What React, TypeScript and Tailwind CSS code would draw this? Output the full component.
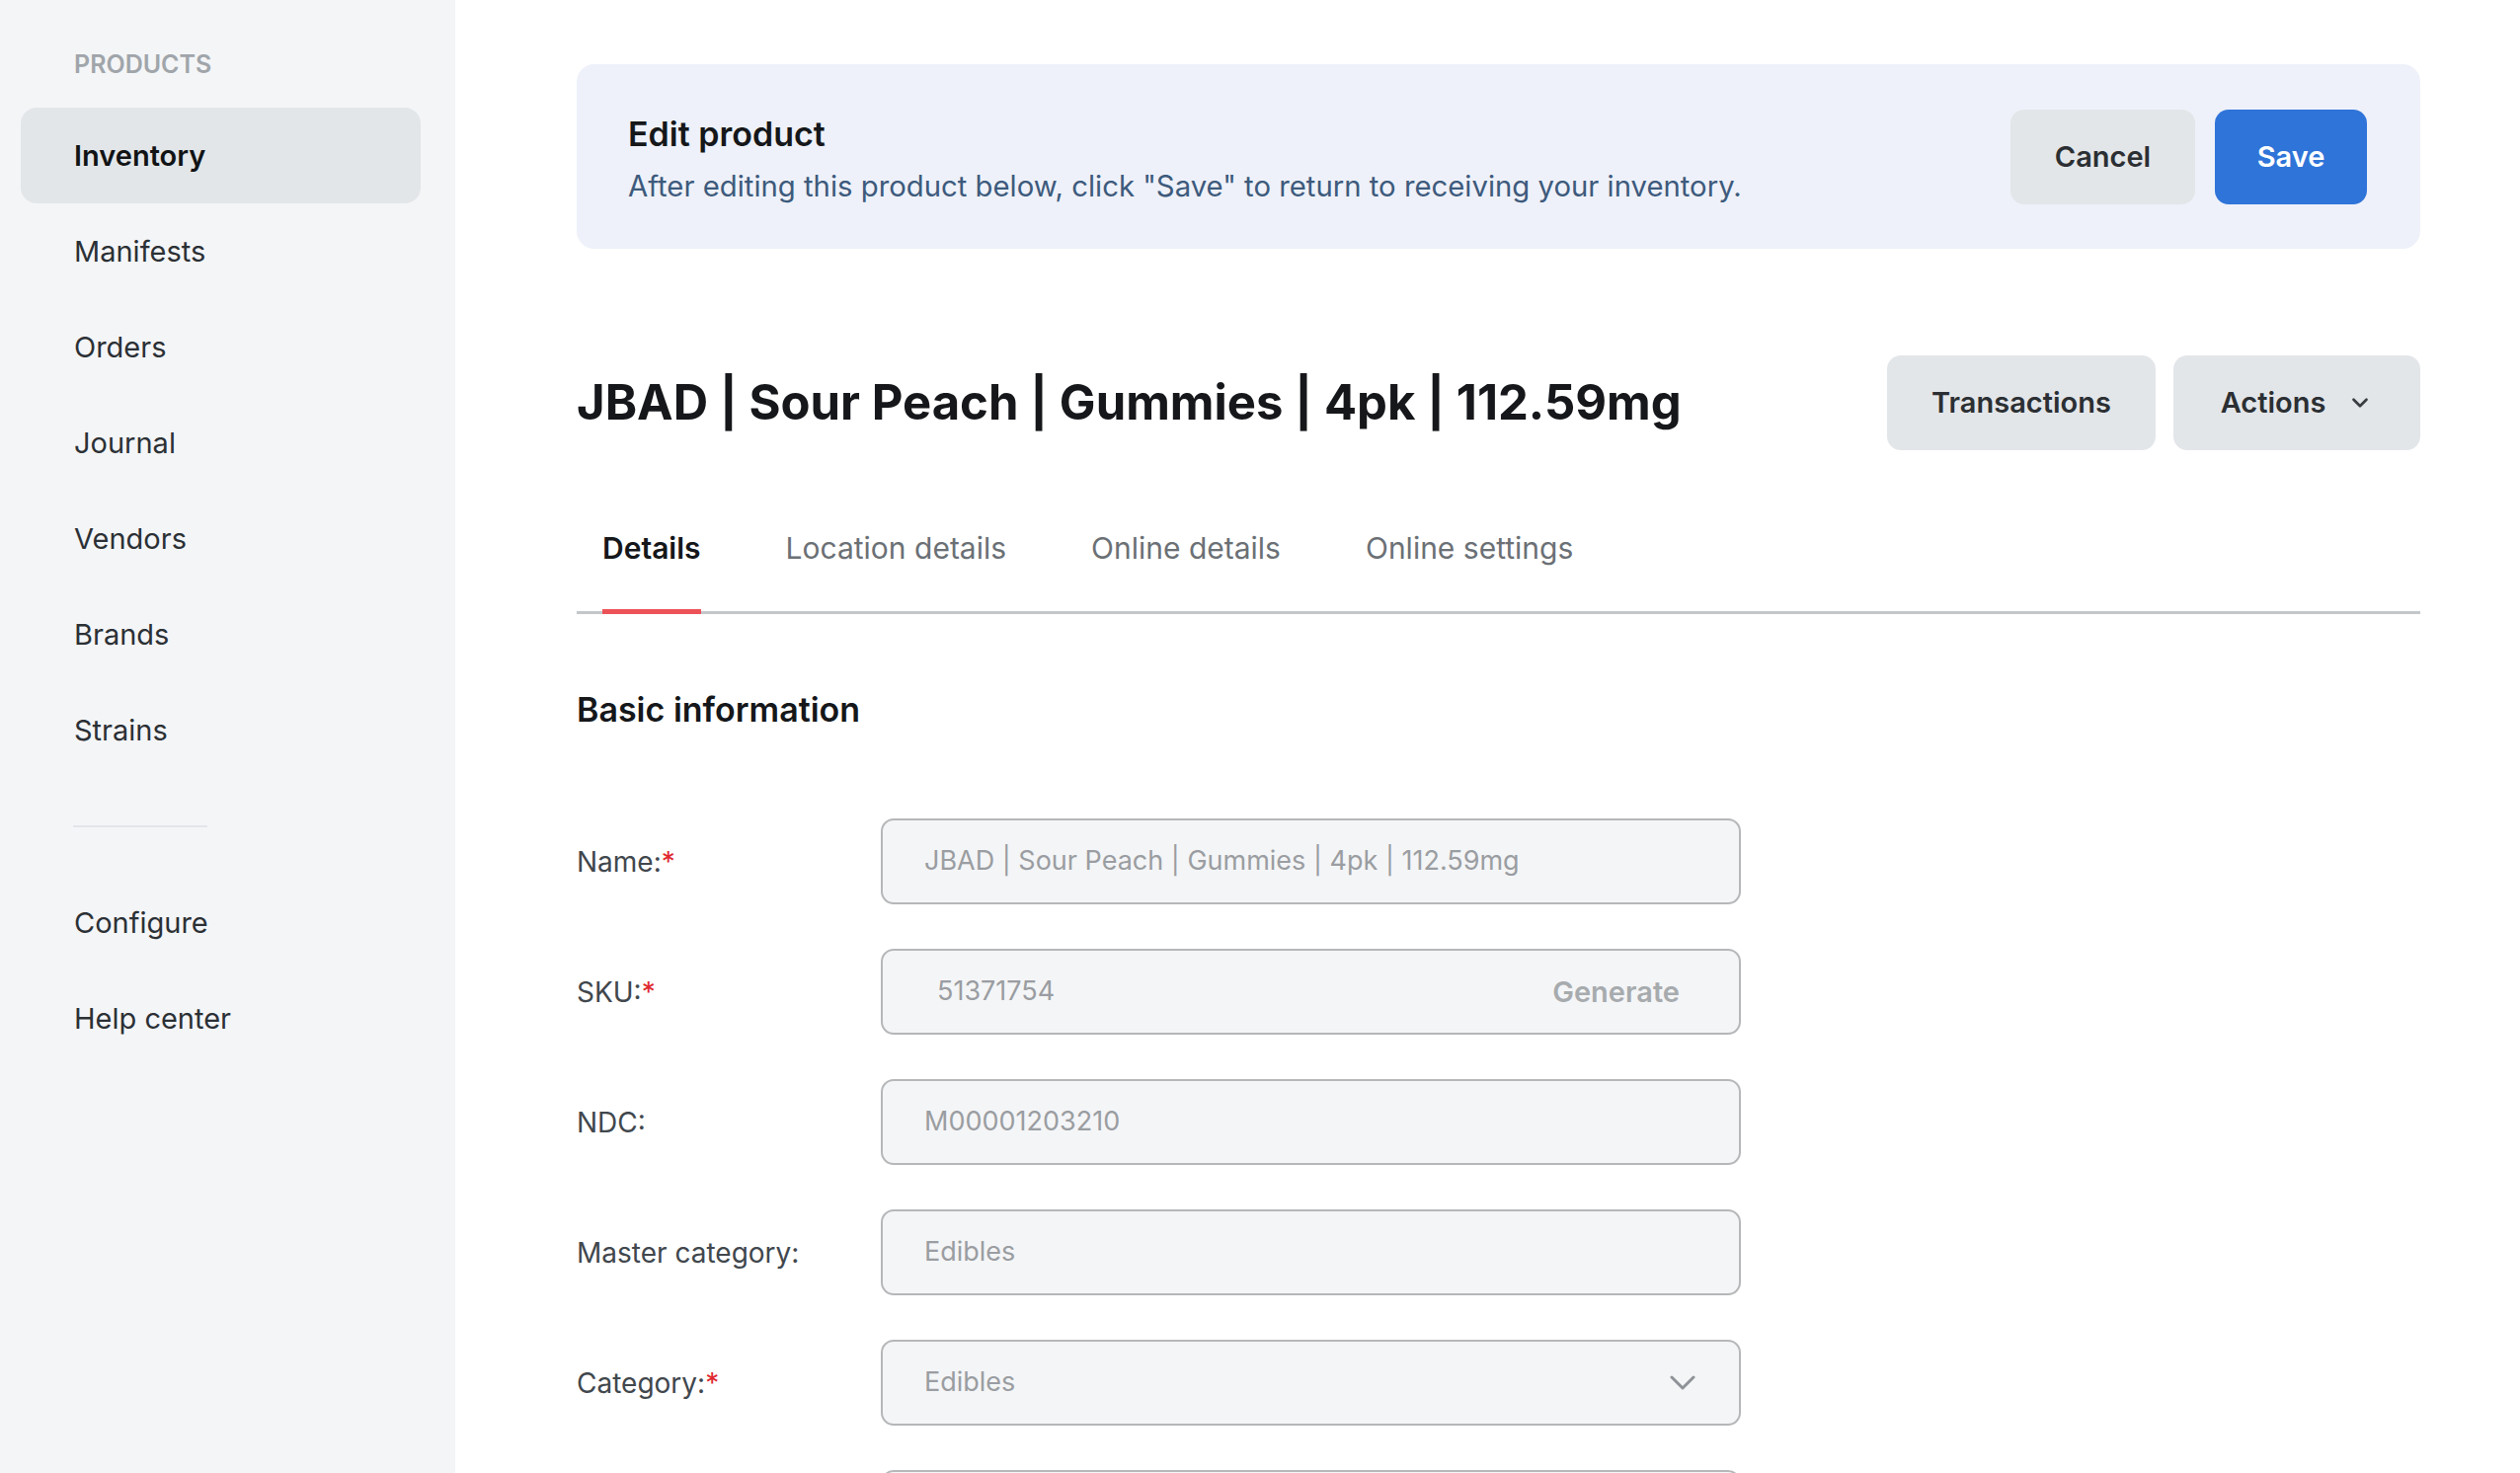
import { ChevronDown } from 'lucide-react'

const navItems = ['Inventory', 'Manifests', 'Orders', 'Journal', 'Vendors', 'Brands', 'Strains']
const tabs = ['Details', 'Location details', 'Online details', 'Online settings']

export default function App() {
  return (
    <div className="flex h-screen overflow-hidden bg-white font-['Inter',sans-serif]">
      <Sidebar />

      <main className="flex-1 pl-[123px] pr-[101px] pt-[65px]">
        {/* Edit banner */}
        <div className="h-[187px] rounded-[18px] bg-[#eef1f9] pl-[52px] pr-[54px] flex items-center justify-between">
          <div className="pt-[8px]">
            <h2 className="text-[34px] leading-[40px] font-semibold text-[#15171a]">Edit product</h2>
            <p className="mt-[13px] text-[29.3px] leading-[40px] text-[#3d5a7c]">
              After editing this product below, click "Save" to return to receiving your inventory.
            </p>
          </div>
          <div className="flex gap-[20px]">
            <button className="h-[96px] w-[187px] rounded-[14px] bg-[#e3e6e9] text-[29px] font-semibold text-[#2b2f33]">Cancel</button>
            <button className="h-[96px] w-[154px] rounded-[14px] bg-[#2f74d8] text-[29px] font-semibold text-white">Save</button>
          </div>
        </div>

        {/* Title row */}
        <div className="mt-[108px] h-[96px] flex items-center justify-between">
          <h1 className="text-[49px] leading-[60px] font-bold text-[#15171a]">JBAD | Sour Peach | Gummies | 4pk | 112.59mg</h1>
          <div className="flex gap-[18px]">
            <button className="h-[96px] w-[272px] rounded-[14px] bg-[#e3e6e9] text-[29px] font-semibold text-[#2b2f33]">Transactions</button>
            <button className="h-[96px] w-[250px] rounded-[14px] bg-[#e3e6e9] text-[29px] font-semibold text-[#2b2f33] flex items-center justify-center gap-[22px]">
              Actions
              <ChevronDown className="w-[26px] h-[26px] text-[#3a3e42]" strokeWidth={2.5} />
            </button>
          </div>
        </div>

        {/* Tabs */}
        <div className="mt-[79px] flex gap-[86px] pl-[26px] border-b-[3px] border-[#c4c7ca]">
          {tabs.map((t, i) => (
            <div key={t} className="relative pb-[44px]">
              <span className={`text-[30px] leading-[40px] ${i === 0 ? 'font-semibold text-[#15171a]' : 'text-[#6b7075]'}`}>{t}</span>
              {i === 0 && <span className="absolute left-0 right-0 bottom-[-3px] h-[5px] bg-[#ec5257]" />}
            </div>
          ))}
        </div>

        <h3 className="mt-[75px] text-[34px] leading-[44px] font-semibold text-[#15171a]">Basic information</h3>

        <div className="mt-[88px] flex flex-col gap-[45px]">
          <Field label="Name:" required value="JBAD | Sour Peach | Gummies | 4pk | 112.59mg" />
          <Field label="SKU:" required value="51371754" generate />
          <Field label="NDC:" value="M00001203210" />
          <Field label="Master category:" value="Edibles" />
          <Field label="Category:" required value="Edibles" select />
          <div className="ml-[308px] w-[871px] h-[87px] rounded-[13px] border-2 border-[#b5b7b9] bg-[#f4f5f7]" />
        </div>
      </main>
    </div>
  )
}

function Sidebar() {
  return (
    <aside className="w-[461px] shrink-0 bg-[#f4f5f7] pl-[21px] pr-[35px] pt-[47px]">
      <div className="pl-[54px] text-[25px] leading-[36px] font-semibold text-[#a0a5aa]">PRODUCTS</div>
      <nav className="mt-[26px]">
        {navItems.map((n, i) => (
          <NavItem key={n} label={n} active={i === 0} />
        ))}
        <div className="ml-[53px] w-[136px] h-[2px] bg-[#e3e5e8] my-[48px]" />
        <NavItem label="Configure" />
        <NavItem label="Help center" />
      </nav>
    </aside>
  )
}

function NavItem({ label, active }: { label: string; active?: boolean }) {
  return (
    <div className={`h-[97px] rounded-[16px] pl-[54px] flex items-center text-[29px] ${active ? 'bg-[#e3e6e9] font-semibold text-[#111315]' : 'text-[#2b3035]'}`}>
      {label}
    </div>
  )
}

function Field({ label, value, required, generate, select }: { label: string; value: string; required?: boolean; generate?: boolean; select?: boolean }) {
  return (
    <div className="flex items-center">
      <label className="w-[308px] shrink-0 text-[28px] text-[#41474d]">
        {label}
        {required && <span className="text-[#e0282e]">*</span>}
      </label>
      <div className={`w-[871px] h-[87px] rounded-[13px] border-2 border-[#b5b7b9] bg-[#f4f5f7] flex items-center justify-between ${generate ? 'pl-[55px] pr-[60px]' : 'pl-[42px] pr-[44px]'}`}>
        <span className="text-[27px] text-[#9a9da1]">{value}</span>
        {generate && <span className="text-[29px] font-semibold text-[#a7abae]">Generate</span>}
        {select && (
          <svg width="26" height="16" viewBox="0 0 26 16" fill="none">
            <path d="M2 2l11 11L24 2" stroke="#8f9398" strokeWidth="3" strokeLinecap="round" strokeLinejoin="round" />
          </svg>
        )}
      </div>
    </div>
  )
}
